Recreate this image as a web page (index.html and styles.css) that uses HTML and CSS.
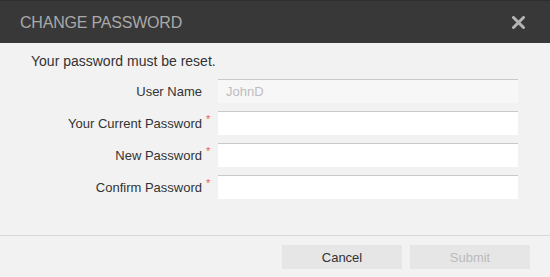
FILE: index.html
```html
<!DOCTYPE html>
<html lang="en">
<head>
    <meta charset="UTF-8">
    <meta name="viewport" content="width=device-width, initial-scale=1.0">
    <title>Change Password</title>
    <link rel="stylesheet" href="styles.css">
</head>
<body>
    <div class="dialog">
        <!-- header -->
        <div class="dialog-header">
            <h2 class="dialog-title">CHANGE PASSWORD</h2>
            <button class="close-btn" aria-label="Close">
                <svg width="13" height="13" viewBox="0 0 13 13">
                    <path d="M1.5 1.5 L11.5 11.5 M11.5 1.5 L1.5 11.5" stroke="#b4b4b4" stroke-width="3" stroke-linecap="round"/>
                </svg>
            </button>
        </div>

        <!-- body -->
        <div class="dialog-body">
            <p class="message">Your password must be reset.</p>
            <form class="pw-form">
                <div class="form-row">
                    <label class="form-label">User Name</label>
                    <span class="req"></span>
                    <input class="form-input" type="text" value="JohnD" disabled>
                </div>
                <div class="form-row">
                    <label class="form-label">Your Current Password</label>
                    <span class="req">*</span>
                    <input class="form-input" type="password">
                </div>
                <div class="form-row">
                    <label class="form-label">New Password</label>
                    <span class="req">*</span>
                    <input class="form-input" type="password">
                </div>
                <div class="form-row">
                    <label class="form-label">Confirm Password</label>
                    <span class="req">*</span>
                    <input class="form-input" type="password">
                </div>
            </form>
        </div>

        <!-- footer -->
        <div class="dialog-footer">
            <button class="btn">Cancel</button>
            <button class="btn btn-disabled" disabled>Submit</button>
        </div>
    </div>
</body>
</html>
```

FILE: styles.css
```css
* {
    margin: 0;
    padding: 0;
    box-sizing: border-box;
}

body {
    font-family: 'Liberation Sans', Arial, Helvetica, sans-serif;
    background: #f2f2f2;
    color: #333;
}

.dialog {
    width: 550px;
    height: 277px;
    background: #f2f2f2;
    display: flex;
    flex-direction: column;
}

/* header */
.dialog-header {
    height: 43px;
    background: #383838;
    border-top: 1px solid #2e2e2e;
    display: flex;
    align-items: center;
    justify-content: space-between;
    padding: 0 25px 0 20px;
}

.dialog-title {
    font-size: 16px;
    font-weight: normal;
    color: #a9a9a9;
    letter-spacing: -0.2px;
    margin-top: 1px;
}

.close-btn {
    background: none;
    border: none;
    width: 13px;
    height: 13px;
    display: flex;
    cursor: pointer;
    margin-top: 1px;
}

/* body */
.dialog-body {
    height: 193px;
    padding: 9px 32px 0 31px;
    border-bottom: 1px solid #d8d8d8;
}

.message {
    font-size: 14px;
    line-height: 18px;
    color: #333;
    margin-bottom: 9px;
}

.pw-form {
    display: flex;
    flex-direction: column;
    gap: 8px;
}

.form-row {
    display: flex;
    align-items: center;
    height: 24px;
}

.form-label {
    width: 171px;
    text-align: right;
    font-size: 13px;
    color: #333;
}

.req {
    width: 16px;
    align-self: flex-start;
    padding: 3px 0 0 4px;
    font-size: 11px;
    line-height: 11px;
    color: #ea5b4a;
}

.form-input {
    width: 300px;
    height: 24px;
    border: none;
    border-top: 1px solid #c9c9c9;
    background: #fff;
    padding: 0 8px;
    font-family: inherit;
    font-size: 13px;
    color: #333;
    outline: none;
}

.form-input:disabled {
    background: #f7f7f7;
    color: #bdbdbd;
}

/* footer */
.dialog-footer {
    display: flex;
    justify-content: flex-end;
    gap: 8px;
    padding: 9px 20px 0 0;
}

.btn {
    width: 120px;
    height: 24px;
    background: #e6e6e6;
    border: none;
    font-family: inherit;
    font-size: 13px;
    color: #333;
    cursor: pointer;
}

.btn-disabled {
    color: #bbb;
    cursor: default;
}
```
